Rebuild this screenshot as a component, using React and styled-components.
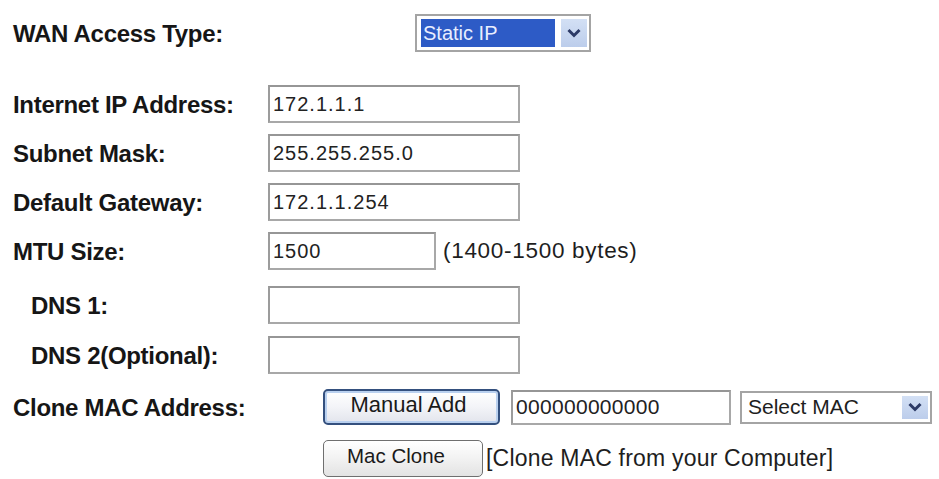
import React from "react";
import styled, { createGlobalStyle } from "styled-components";

const Global = createGlobalStyle`
  html, body { margin: 0; padding: 0; background: #ffffff; }
  body { font-family: "Liberation Sans", Arial, sans-serif; color: #1a1a1a; }
  * { box-sizing: border-box; }
`;

const Form = styled.div`
  width: 939px;
  height: 479px;
  padding: 14px 0 0 13px;
  display: flex;
  flex-direction: column;
  overflow: hidden;
`;

const Row = styled.div`
  display: grid;
  grid-template-columns: 255px 1fr;
  align-items: center;
  height: 38px;
  margin-top: ${(p) => p.$mt || 0}px;
`;

const Label = styled.div`
  font-weight: bold;
  font-size: 24px;
  color: #161616;
  padding-left: ${(p) => p.$indent || 0}px;
  white-space: nowrap;
  letter-spacing: -0.3px;
  padding-top: 2px;
`;

const Controls = styled.div`
  display: flex;
  align-items: center;
  gap: ${(p) => p.$gap ?? 0}px;
  padding-left: ${(p) => p.$offset || 0}px;
  height: 100%;
`;

const TextBox = styled.div`
  width: ${(p) => p.$w}px;
  height: ${(p) => p.$h || 38}px;
  border: 2px solid #a8a8a8;
  border-top-color: #969696;
  border-left-color: #9c9c9c;
  background: #fff;
  display: flex;
  align-items: center;
  padding-left: 3px;
  font-size: ${(p) => p.$fs || 20}px;
  letter-spacing: ${(p) => p.$ls ?? 1}px;
  color: #222;
  white-space: nowrap;
`;

const Note = styled.span`
  font-size: ${(p) => p.$fs || 22}px;
  color: #1e1e1e;
  margin-left: ${(p) => p.$ml || 0}px;
  letter-spacing: ${(p) => p.$ls ?? 0}px;
  white-space: nowrap;
`;

const Select = styled.div`
  width: ${(p) => p.$w}px;
  height: ${(p) => p.$h}px;
  border: 2px solid #a4a4a4;
  background: #fff;
  display: flex;
  align-items: center;
  padding: 3px 2px 3px 4px;
  gap: 6px;
`;

const SelectValue = styled.div`
  flex: 1;
  height: 100%;
  display: flex;
  align-items: center;
  padding-left: 2px;
  font-size: ${(p) => p.$fs}px;
  background: ${(p) => (p.$selected ? "#2d5bc6" : "transparent")};
  color: ${(p) => (p.$selected ? "#e8eeff" : "#1e1e1e")};
  white-space: nowrap;
`;

const ArrowBox = styled.div`
  width: 26px;
  height: 100%;
  background: linear-gradient(#d3e0f5, #bccdeb);
  display: flex;
  align-items: center;
  justify-content: center;
`;

const Button = styled.button`
  width: ${(p) => p.$w}px;
  height: ${(p) => p.$h}px;
  border-radius: 5px;
  border: ${(p) => (p.$focus ? "2px solid #34507e" : "1.5px solid #6f6f6f")};
  background: ${(p) =>
    p.$focus
      ? "linear-gradient(#ffffff, #f3f4f8 50%, #e2e4ec)"
      : "linear-gradient(#ffffff, #f2f2f2 50%, #e3e3e3)"};
  box-shadow: ${(p) => (p.$focus ? "inset 0 0 0 2px #b9d0ef" : "none")};
  font-family: "Liberation Sans", Arial, sans-serif;
  font-size: ${(p) => p.$fs}px;
  color: #1a1a1a;
  padding: 0 ${(p) => p.$pr || 6}px 5px 0;
  cursor: pointer;
`;

const Chevron = () => (
  <svg width="16" height="12" viewBox="0 0 16 12">
    <polyline points="2.5,3 8,8.5 13.5,3" fill="none" stroke="#2c3a66" strokeWidth="3" />
  </svg>
);

export default function App() {
  return (
    <>
      <Global />
      <Form>
        <Row>
          <Label>WAN Access Type:</Label>
          <Controls $offset={147}>
            <Select $w={176} $h={38}>
              <SelectValue $selected $fs={20}>Static IP</SelectValue>
              <ArrowBox><Chevron /></ArrowBox>
            </Select>
          </Controls>
        </Row>
        <Row $mt={33}>
          <Label>Internet IP Address:</Label>
          <Controls>
            <TextBox $w={252}>172.1.1.1</TextBox>
          </Controls>
        </Row>
        <Row $mt={11}>
          <Label>Subnet Mask:</Label>
          <Controls>
            <TextBox $w={252}>255.255.255.0</TextBox>
          </Controls>
        </Row>
        <Row $mt={11}>
          <Label>Default Gateway:</Label>
          <Controls>
            <TextBox $w={252}>172.1.1.254</TextBox>
          </Controls>
        </Row>
        <Row $mt={11}>
          <Label>MTU Size:</Label>
          <Controls>
            <TextBox $w={168}>1500</TextBox>
            <Note $ml={7} $fs={22.5} $ls={0.7}>(1400-1500 bytes)</Note>
          </Controls>
        </Row>
        <Row $mt={16}>
          <Label $indent={18}>DNS 1:</Label>
          <Controls>
            <TextBox $w={252} />
          </Controls>
        </Row>
        <Row $mt={12}>
          <Label $indent={18}>DNS 2(Optional):</Label>
          <Controls>
            <TextBox $w={252} />
          </Controls>
        </Row>
        <Row $mt={14}>
          <Label>Clone MAC Address:</Label>
          <Controls $offset={55} $gap={0}>
            <Button $focus $w={177} $h={36} $fs={22}>Manual Add</Button>
            <TextBox $w={220} $h={35} $fs={21} $ls={0.3} style={{ marginLeft: 11 }}>000000000000</TextBox>
            <Select $w={192} $h={33} style={{ marginLeft: 9 }}>
              <SelectValue $fs={21}>Select MAC</SelectValue>
              <ArrowBox><Chevron /></ArrowBox>
            </Select>
          </Controls>
        </Row>
        <Row $mt={13}>
          <div />
          <Controls $offset={55}>
            <Button $w={160} $h={37} $fs={20.5} $pr={14}>Mac Clone</Button>
            <Note $ml={3} $fs={23} $ls={0.2}>[Clone MAC from your Computer]</Note>
          </Controls>
        </Row>
      </Form>
    </>
  );
}
